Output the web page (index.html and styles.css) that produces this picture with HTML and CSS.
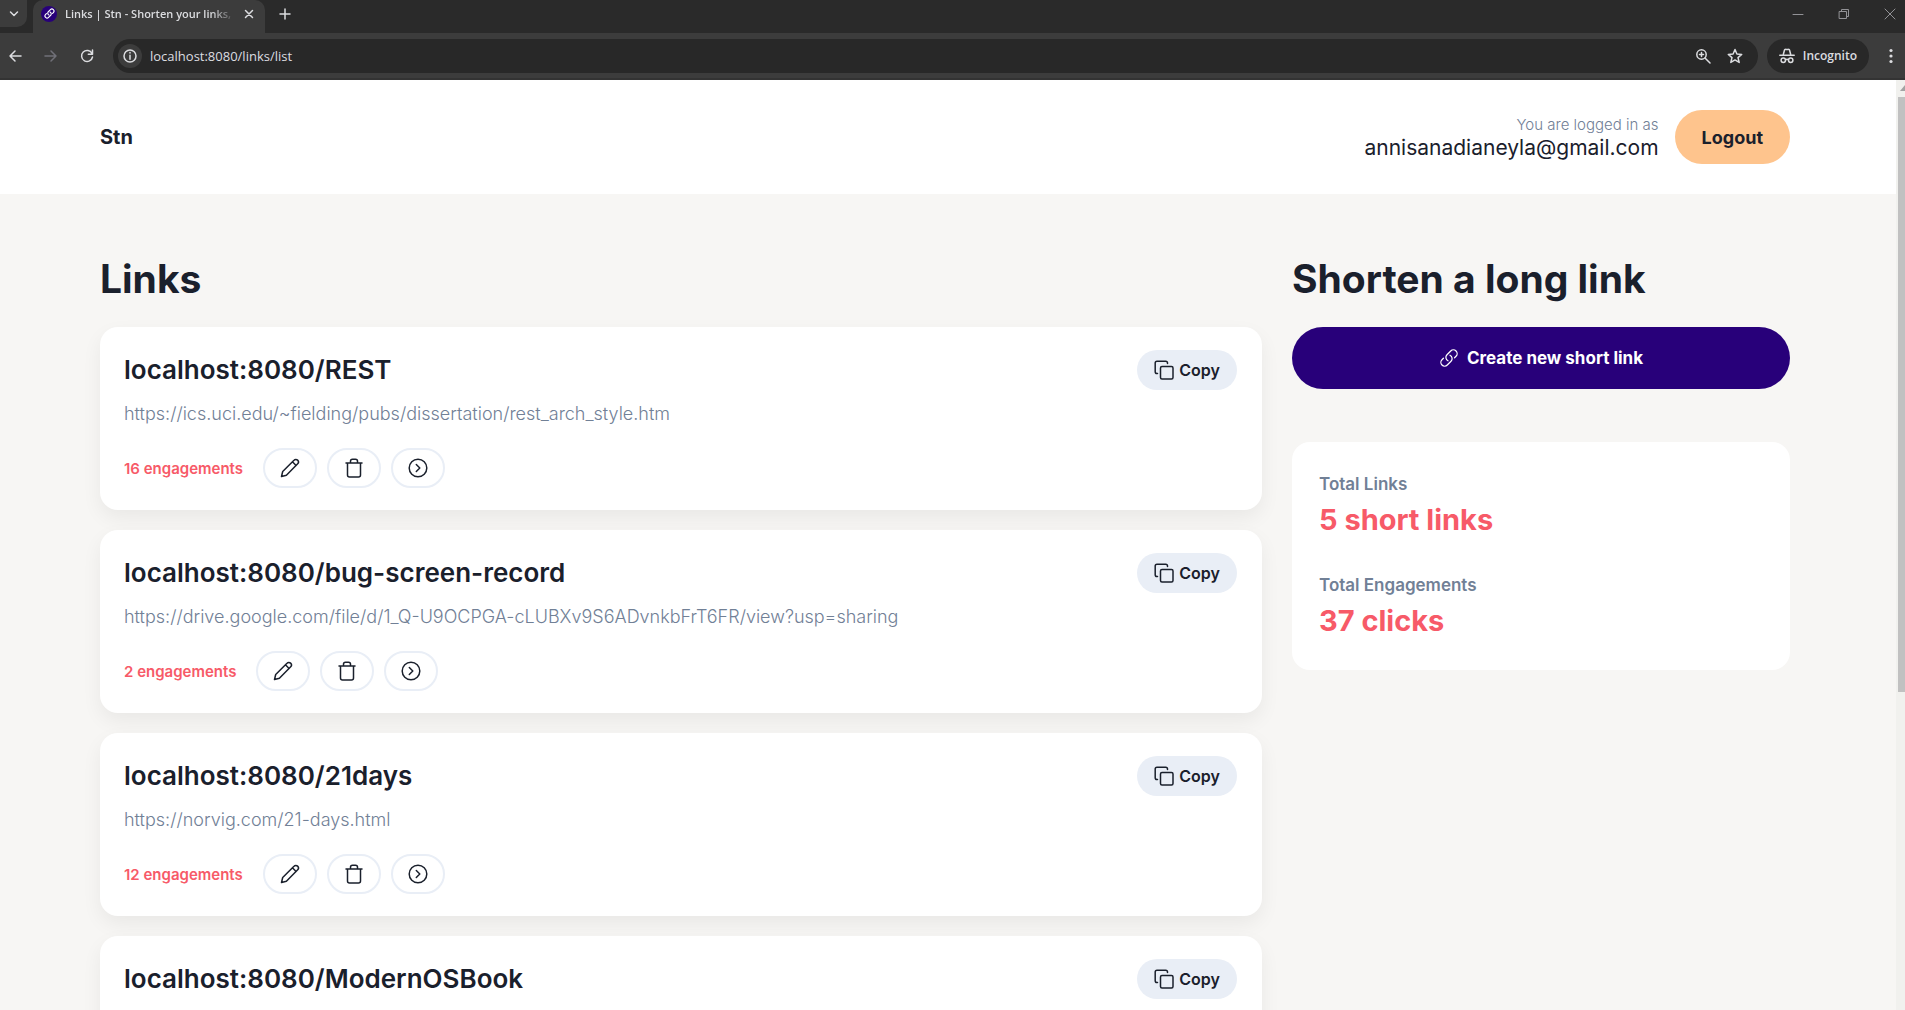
FILE: index.html
```html
<!DOCTYPE html>
<html lang="en">
<head>
<meta charset="utf-8">
<meta name="viewport" content="width=device-width, initial-scale=1">
<title>Links | Stn - Shorten your links</title>
<link rel="stylesheet" href="styles.css">
</head>
<body>
<svg class="sprite" aria-hidden="true">
  <symbol id="copy" viewBox="0 0 20 20"><rect x="6.5" y="6.5" width="12.5" height="12.5" rx="1.5"/><path d="M3.5 13.5H3A1.8 1.8 0 0 1 1.2 11.700V3A1.8 1.8 0 0 1 3 1.200H11.700A1.8 1.8 0 0 1 13.500 3V3.500"/></symbol>
  <symbol id="pencil" viewBox="0 0 20 20"><path d="M1.500 18.500 2.700 13.500 14 2.200a2.400 2.400 0 0 1 3.700 3.500L6.400 17.200Z M12.400 3.800l3.700 3.700"/></symbol>
  <symbol id="trash" viewBox="0 0 20 20"><path d="M2 5H18M6.500 5V3.200Q6.500 1.200 8.500 1.200H11.500Q13.500 1.200 13.500 3.200V5M3.500 5V17Q3.500 19 5.500 19H14.500Q16.500 19 16.500 17V5"/></symbol>
  <symbol id="go" viewBox="0 0 20 20"><circle cx="10" cy="10" r="8.800"/><path d="M8.300 6.500 11.800 10 8.300 13.500"/></symbol>
  <symbol id="chain" viewBox="0 0 24 24"><path d="M13.190 8.688a4.500 4.500 0 0 1 1.242 7.244l-4.500 4.500a4.500 4.500 0 0 1-6.364-6.364l1.757-1.757m13.350-.622 1.757-1.757a4.500 4.500 0 0 0-6.364-6.364l-4.500 4.500a4.500 4.500 0 0 0 1.242 7.244"/></symbol>
</svg>

<header class="browser">
  <div class="tabstrip">
    <button class="tab-search" aria-label="Search tabs"><svg width="10" height="10" viewBox="0 0 10 10"><path d="M1.500 3 5 6.500 8.500 3"/></svg></button>
    <div class="tab">
      <span class="favicon"><svg width="11" height="11"><use href="#chain"/></svg></span>
      <span class="tab-title">Links | Stn - Shorten your links,</span>
      <button class="plain" aria-label="Close tab"><svg width="10" height="10" viewBox="0 0 10 10"><path d="M1.500 1.500l7 7m0-7-7 7"/></svg></button>
    </div>
    <button class="plain new-tab" aria-label="New tab"><svg width="12" height="12" viewBox="0 0 12 12"><path d="M6 1v10M1 6h10"/></svg></button>
    <div class="window-buttons">
      <button class="plain" aria-label="Minimize"><svg width="12" height="12" viewBox="0 0 12 12"><path d="M1 6.500h10"/></svg></button>
      <button class="plain" aria-label="Restore"><svg width="12" height="12" viewBox="0 0 12 12"><path d="M1.500 3.500h7v7h-7zM3.500 3.500v-2h7v7h-2"/></svg></button>
      <button class="plain" aria-label="Close"><svg width="12" height="12" viewBox="0 0 12 12"><path d="M1 1l10 10m0-10L1 11"/></svg></button>
    </div>
  </div>
  <div class="toolbar">
    <button class="plain" aria-label="Back"><svg width="14" height="14" viewBox="0 0 14 14"><path d="M13 7H2M7 2 2 7l5 5"/></svg></button>
    <button class="plain dim" aria-label="Forward"><svg width="14" height="14" viewBox="0 0 14 14"><path d="M1 7h11M7 2l5 5-5 5"/></svg></button>
    <button class="plain" aria-label="Reload"><svg width="14" height="14" viewBox="0 0 14 14"><path d="M12 4.500A5.500 5.500 0 1 0 12.500 8M12.500 1v4.200H8.300"/></svg></button>
    <div class="address">
      <span class="info"><svg width="14" height="14" viewBox="0 0 14 14"><circle cx="7" cy="7" r="6"/><path d="M7 6.300v4M7 3.500v.5"/></svg></span>
      <input class="url-box" type="text" value="localhost:8080/links/list" aria-label="Address">
      <button class="plain" aria-label="Zoom"><svg width="16" height="16" viewBox="0 0 16 16"><circle cx="6.500" cy="6.500" r="4.700"/><path d="M10 10l5 5M4.500 6.500h4M6.500 4.500v4"/></svg></button>
      <button class="plain" aria-label="Bookmark"><svg width="16" height="16" viewBox="0 0 16 16"><path d="M8 1.500 9.900 6l4.800.4-3.700 3.200 1.200 4.800L8 11.900l-4.200 2.500L5 9.600 1.300 6.400 6.100 6Z"/></svg></button>
    </div>
    <button class="incognito"><svg width="16" height="16" viewBox="0 0 16 16"><path d="M4.300 6.500 5.500 2Q6 1 7 1.600H9Q10 1 10.500 2L11.700 6.500"/><path d="M.8 7.200H15.200M6.500 11.700Q8 11 9.500 11.700"/><circle cx="4.300" cy="12.300" r="2.200"/><circle cx="11.700" cy="12.300" r="2.200"/></svg>Incognito</button>
    <button class="plain" aria-label="Menu"><svg width="4" height="16" viewBox="0 0 4 16"><g class="solid"><circle cx="2" cy="2.500" r="1.600"/><circle cx="2" cy="8" r="1.600"/><circle cx="2" cy="13.500" r="1.600"/></g></svg></button>
  </div>
</header>

<div class="viewport">
  <div class="page">
    <header class="site-header">
      <a class="brand" href="#">Stn</a>
      <div class="account">
        <div class="who"><span class="who-label">You are logged in as</span><span class="who-mail">annisanadianeyla@gmail.com</span></div>
        <button class="logout">Logout</button>
      </div>
    </header>
    <main class="columns">
      <section>
        <h1 class="heading">Links</h1>
        <div class="cards">
          <article class="card">
            <div class="card-top"><h2 class="short">localhost:8080/REST</h2><button class="copy"><svg class="icon"><use href="#copy"/></svg>Copy</button></div>
            <p class="long">https://ics.uci.edu/~fielding/pubs/dissertation/rest_arch_style.htm</p>
            <div class="actions"><span class="count">16 engagements</span><button class="action" aria-label="Edit"><svg class="icon"><use href="#pencil"/></svg></button><button class="action" aria-label="Delete"><svg class="icon"><use href="#trash"/></svg></button><button class="action" aria-label="Details"><svg class="icon"><use href="#go"/></svg></button></div>
          </article>
          <article class="card">
            <div class="card-top"><h2 class="short">localhost:8080/bug-screen-record</h2><button class="copy"><svg class="icon"><use href="#copy"/></svg>Copy</button></div>
            <p class="long">https://drive.google.com/file/d/1_Q-U9OCPGA-cLUBXv9S6ADvnkbFrT6FR/view?usp=sharing</p>
            <div class="actions"><span class="count">2 engagements</span><button class="action" aria-label="Edit"><svg class="icon"><use href="#pencil"/></svg></button><button class="action" aria-label="Delete"><svg class="icon"><use href="#trash"/></svg></button><button class="action" aria-label="Details"><svg class="icon"><use href="#go"/></svg></button></div>
          </article>
          <article class="card">
            <div class="card-top"><h2 class="short">localhost:8080/21days</h2><button class="copy"><svg class="icon"><use href="#copy"/></svg>Copy</button></div>
            <p class="long">https://norvig.com/21-days.html</p>
            <div class="actions"><span class="count">12 engagements</span><button class="action" aria-label="Edit"><svg class="icon"><use href="#pencil"/></svg></button><button class="action" aria-label="Delete"><svg class="icon"><use href="#trash"/></svg></button><button class="action" aria-label="Details"><svg class="icon"><use href="#go"/></svg></button></div>
          </article>
          <article class="card">
            <div class="card-top"><h2 class="short">localhost:8080/ModernOSBook</h2><button class="copy"><svg class="icon"><use href="#copy"/></svg>Copy</button></div>
          </article>
        </div>
      </section>
      <aside>
        <h2 class="heading">Shorten a long link</h2>
        <button class="create"><svg class="icon"><use href="#chain"/></svg>Create new short link</button>
        <dl class="stats">
          <div><dt>Total Links</dt><dd>5 short links</dd></div>
          <div><dt>Total Engagements</dt><dd>37 clicks</dd></div>
        </dl>
      </aside>
    </main>
  </div>
  <div class="scrollbar" aria-hidden="true"><span class="scroll-arrow"></span><span class="scroll-thumb"></span></div>
</div>
</body>
</html>
```
FILE: styles.css
```css
* { box-sizing: border-box; }
body {
  margin: 0;
  height: 100vh;
  display: flex;
  flex-direction: column;
  overflow: hidden;
  font-family: Inter, "Liberation Sans", sans-serif;
  color: #1a202c;
}
h1, h2, p, dl, dd { margin: 0; }
button { font: inherit; color: inherit; border: 0; padding: 0; cursor: pointer; }
svg { fill: none; stroke: currentColor; stroke-width: 1.5; stroke-linecap: round; stroke-linejoin: round; flex: none; }
.sprite { display: none; }
.icon { width: 20px; height: 20px; }
.solid { fill: currentColor; stroke: none; }

/* Browser frame */
.browser { flex: none; color: #dcdde0; background: #3c3c3c; border-bottom: 2px solid #333; font-family: "Open Sans", sans-serif; font-size: 12px; }
.plain { display: flex; background: none; }
.tabstrip { display: flex; align-items: center; height: 33px; background: #2a2a2a; }
.tab-search { display: flex; align-items: center; justify-content: center; align-self: flex-start; width: 27px; height: 27px; background: #3c3c3c; border-radius: 0 0 10px 0; }
.tab { display: flex; align-items: center; gap: 8px; width: 232px; height: 33px; margin-left: 6px; padding: 0 11px 6px 8px; background: #3c3c3c; border-radius: 10px 10px 0 0; }
.favicon { display: flex; align-items: center; justify-content: center; width: 16px; height: 16px; border-radius: 50%; background: #28007a; color: #fff; }
.favicon svg { stroke-width: 2.5; }
.tab-title { flex: 1; white-space: nowrap; font-size: 11px; font-weight: 600; mask-image: linear-gradient(to right, #000 85%, transparent); }
.new-tab { margin: 0 0 6px 14px; }
.window-buttons { display: flex; gap: 34px; margin: 0 9px 6px auto; color: #929296; }
.window-buttons svg { stroke-width: 1; }
.toolbar { display: flex; align-items: center; gap: 22px; height: 45px; padding: 0 12px 0 8px; }
.dim { color: #707078; }
.address { flex: 1; display: flex; align-items: center; gap: 16px; height: 34px; padding: 0 15px 0 5px; border-radius: 17px; background: #282828; }
.toolbar > .address { margin-left: -3px; }
.info { display: flex; align-items: center; justify-content: center; width: 24px; height: 24px; border-radius: 50%; background: #3c3c3c; }
.url-box { flex: 1; min-width: 0; margin-left: -8px; padding: 0; border: 0; outline: 0; background: none; color: inherit; font: 13px "Open Sans", sans-serif; }
.incognito { display: flex; align-items: center; gap: 8px; height: 34px; margin-left: -13px; margin-right: -2px; padding: 0 12px; border-radius: 17px; background: #282828; font-size: 12px; font-weight: 600; }

/* Page */
.viewport { flex: 1; min-height: 0; display: flex; overflow: hidden; }
.page { flex: 1; min-width: 0; background: #f7f6f4; overflow: hidden; }
.site-header { display: flex; align-items: center; justify-content: space-between; height: 114px; padding: 0 106px 0 100px; background: #fff; }
.brand { color: inherit; text-decoration: none; font-size: 20px; font-weight: 700; }
.account { display: flex; align-items: center; gap: 16px; }
.who { display: flex; flex-direction: column; align-items: flex-end; }
.who-label { font-size: 15px; line-height: 22px; font-weight: 300; color: #718096; }
.who-mail { font-size: 21px; line-height: 24px; }
.logout { height: 54px; padding: 0 27px; border-radius: 27px; background: #fec48d; font-size: 18px; font-weight: 700; }
.columns { display: grid; grid-template-columns: 7fr 3fr; gap: 30px; padding: 60px 106px 60px 100px; }
.heading { margin-bottom: 23px; font-size: 39px; line-height: 50px; font-weight: 700; white-space: nowrap; }
.cards { display: flex; flex-direction: column; gap: 20px; }
.card { min-height: 183px; padding: 23px 25px 22px 24px; border-radius: 18px; background: #fff; box-shadow: 0 8px 20px rgba(0, 0, 0, .06); }
.card-top { display: flex; align-items: center; justify-content: space-between; height: 40px; }
.short { font-size: 26px; line-height: 40px; font-weight: 600; }
.long { margin: 9px 0 19px; font-size: 18px; line-height: 30px; font-weight: 300; color: #718096; }
.copy { display: flex; align-items: center; justify-content: center; gap: 5px; width: 100px; height: 40px; border-radius: 20px; background: #e9eef6; font-size: 16px; font-weight: 600; }
.actions { display: flex; align-items: center; gap: 10px; }
.count { margin-right: 10px; color: #f75a68; font-size: 15px; font-weight: 600; }
.action { display: flex; align-items: center; justify-content: center; width: 54px; height: 40px; border: 2px solid #e9eef6; border-radius: 20px; background: #fff; }
.create { display: flex; align-items: center; justify-content: center; gap: 8px; width: 100%; height: 62px; border-radius: 31px; background: #28007a; color: #fff; font-size: 17px; font-weight: 700; }
.stats { display: flex; flex-direction: column; gap: 30px; margin-top: 53px; padding: 28px 27px; min-height: 228px; border-radius: 18px; background: #fff; }
.stats dt { font-size: 17px; line-height: 28px; font-weight: 600; color: #718096; }
.stats dd { font-size: 29px; line-height: 43px; font-weight: 700; color: #f75a68; }
.scrollbar { display: flex; flex-direction: column; align-items: flex-end; width: 9px; background: #f1f1ee; }
.scroll-arrow { height: 17px; width: 5px; border-bottom: 6px solid #a3a3a3; border-left: 5px solid transparent; background: none; margin-top: -6px; margin-bottom: 6px; }
.scroll-thumb { width: 7px; height: 64%; background: #c1c1c1; }
```
